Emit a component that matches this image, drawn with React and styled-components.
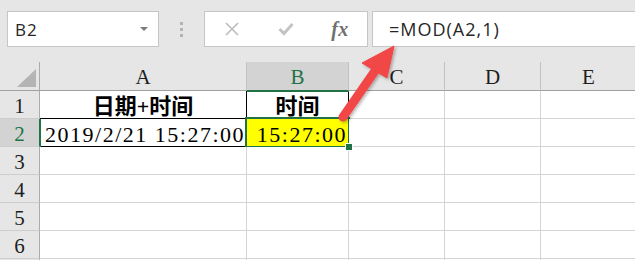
import styled, { createGlobalStyle } from 'styled-components'

const GlobalStyle = createGlobalStyle`
  html, body {
    margin: 0;
    padding: 0;
    background: #e6e6e6;
  }
`

const Page = styled.div`
  position: relative;
  width: 635px;
  height: 260px;
  overflow: hidden;
  background: #e6e6e6;
  font-family: "Liberation Serif", "Noto Sans CJK SC", serif;
`

const Toolbar = styled.div`
  display: flex;
  align-items: flex-start;
  height: 62px;
  padding: 11px 0 0 7px;
  box-sizing: border-box;
`

const NameBox = styled.div`
  display: flex;
  align-items: center;
  justify-content: space-between;
  width: 152px;
  height: 36px;
  box-sizing: border-box;
  padding: 0 10px 0 7px;
  background: #fff;
  border: 1px solid #c6c6c6;
  font-family: "Open Sans", sans-serif;
  font-size: 17px;
  letter-spacing: 1px;
  color: #262626;
`

const Caret = styled.span`
  width: 0;
  height: 0;
  border-left: 4px solid transparent;
  border-right: 4px solid transparent;
  border-top: 4px solid #7b7b7b;
`

const Grip = styled.div`
  display: flex;
  flex-direction: column;
  align-items: center;
  justify-content: center;
  gap: 3px;
  width: 45px;
  height: 36px;
`

const GripDot = styled.span`
  width: 3px;
  height: 3px;
  background: #b3b3b3;
`

const FnBox = styled.div`
  display: flex;
  width: 164px;
  height: 36px;
  box-sizing: border-box;
  background: #fff;
  border: 1px solid #c6c6c6;
`

const FnSlot = styled.div`
  display: flex;
  align-items: center;
  justify-content: center;
  flex: 1;
`

const FxLabel = styled.span`
  font-family: "Liberation Serif", serif;
  font-style: italic;
  font-weight: 700;
  font-size: 20px;
  color: #707070;
  letter-spacing: 0.5px;
`

const FormulaBox = styled.div`
  display: flex;
  align-items: center;
  flex: 1;
  height: 36px;
  box-sizing: border-box;
  margin: 0 -2px 0 4px;
  padding-left: 16px;
  background: #fff;
  border: 1px solid #c6c6c6;
  font-family: "Open Sans", sans-serif;
  font-size: 18px;
  letter-spacing: 1px;
  color: #262626;
`

const Sheet = styled.div`
  display: grid;
  grid-template-columns: 40px 207px 102px 96px 96px 96px;
  grid-template-rows: 29px;
  grid-auto-rows: 28px;
`

const Corner = styled.div`
  position: relative;
  box-sizing: border-box;
  border-right: 1px solid #ababab;
  border-bottom: 1px solid #a0a0a0;
`

const CornerMark = styled.span`
  position: absolute;
  right: 3px;
  bottom: 3px;
  width: 0;
  height: 0;
  border-left: 19px solid transparent;
  border-bottom: 18px solid #b4b4b4;
`

const ColHead = styled.div`
  position: relative;
  z-index: ${p => (p.$active ? 1 : 0)};
  display: flex;
  align-items: center;
  justify-content: center;
  box-sizing: border-box;
  padding-top: 2px;
  background: ${p => (p.$active ? '#d3d3d3' : '#e6e6e6')};
  border-right: 1px solid #c2c2c2;
  border-bottom: 1px solid ${p => (p.$active ? '#217346' : '#a0a0a0')};
  box-shadow: ${p => (p.$active ? '0 1px 0 #217346' : 'none')};
  color: ${p => (p.$active ? '#217346' : '#1e1e1e')};
  font-size: 21px;
  line-height: 22px;
`

const RowHead = styled.div`
  position: relative;
  z-index: ${p => (p.$active ? 1 : 0)};
  display: flex;
  align-items: center;
  justify-content: center;
  box-sizing: border-box;
  padding-top: 2px;
  background: ${p => (p.$active ? '#d3d3d3' : '#e6e6e6')};
  border-right: 1px solid ${p => (p.$active ? '#217346' : '#ababab')};
  border-bottom: 1px solid #cdcdcd;
  box-shadow: ${p => (p.$active ? '1px 0 0 #217346' : 'none')};
  color: ${p => (p.$active ? '#217346' : '#1e1e1e')};
  font-size: 21px;
  line-height: 22px;
`

const Cell = styled.div`
  position: relative;
  display: flex;
  align-items: flex-end;
  justify-content: ${p => (p.$center ? 'center' : 'flex-end')};
  box-sizing: border-box;
  padding: 0 ${p => (p.$mono ? '1px' : '3px')} 0 3px;
  background: ${p => p.$fill || '#fff'};
  border-right: 1px solid ${p => (p.$edge ? '#000' : '#d4d4d4')};
  border-bottom: 1px solid ${p => (p.$edge ? '#000' : '#d4d4d4')};
  font-size: 22px;
  line-height: 22px;
  font-weight: ${p => (p.$bold ? 700 : 400)};
  letter-spacing: ${p => (p.$mono ? '1.5px' : '0')};
  color: #000;
  white-space: nowrap;
`

const Selection = styled.span`
  position: absolute;
  top: -2px;
  left: -2px;
  right: -2px;
  bottom: -2px;
  border: 2px solid #217346;
  pointer-events: none;
`

const FillHandle = styled.span`
  position: absolute;
  right: -5px;
  bottom: -5px;
  width: 6px;
  height: 6px;
  background: #217346;
  border: 1px solid #fff;
  z-index: 2;
`

const Overlay = styled.svg`
  position: absolute;
  top: 0;
  left: 0;
  pointer-events: none;
  z-index: 5;
`

const columns = ['A', 'B', 'C', 'D', 'E']

const blank = [{}, {}, {}, {}, {}]

const rows = [
  [
    { text: '日期+时间', bold: true, center: true, edge: true },
    { text: '时间', bold: true, center: true, edge: true },
    {},
    {},
    {},
  ],
  [
    { text: '2019/2/21 15:27:00', mono: true, edge: true },
    { text: '15:27:00', mono: true, edge: true, fill: '#ffff00', selected: true },
    {},
    {},
    {},
  ],
  blank,
  blank,
  blank,
  blank,
]

const CancelIcon = () => (
  <svg width="16" height="16" viewBox="0 0 16 16">
    <path d="M2 2 L14 14 M14 2 L2 14" stroke="#bcbcbc" strokeWidth="1.6" fill="none" />
  </svg>
)

const EnterIcon = () => (
  <svg width="16" height="14" viewBox="0 0 16 14">
    <path d="M1.5 7 L6 11.5 L14.5 2" stroke="#c4c4c4" strokeWidth="3" fill="none" />
  </svg>
)

const Arrow = () => (
  <Overlay width="635" height="260" viewBox="0 0 635 260">
    <defs>
      <filter id="arrowShadow" x="-20%" y="-20%" width="140%" height="140%">
        <feDropShadow dx="1.5" dy="1.5" stdDeviation="1.5" floodColor="#000" floodOpacity="0.3" />
      </filter>
    </defs>
    <g filter="url(#arrowShadow)" fill="#f24747" stroke="#f24747">
      <line x1="377" y1="68" x2="343" y2="117" strokeWidth="9" strokeLinecap="round" />
      <polygon points="394,46 362,63 387,78" strokeWidth="1" strokeLinejoin="round" />
    </g>
  </Overlay>
)

const App = () => {
  return (
    <Page>
      <GlobalStyle />
      <Toolbar>
        <NameBox>
          B2
          <Caret />
        </NameBox>
        <Grip>
          <GripDot />
          <GripDot />
          <GripDot />
        </Grip>
        <FnBox>
          <FnSlot>
            <CancelIcon />
          </FnSlot>
          <FnSlot>
            <EnterIcon />
          </FnSlot>
          <FnSlot>
            <FxLabel>fx</FxLabel>
          </FnSlot>
        </FnBox>
        <FormulaBox>=MOD(A2,1)</FormulaBox>
      </Toolbar>

      <Sheet>
        <Corner>
          <CornerMark />
        </Corner>
        {columns.map(col => (
          <ColHead key={col} $active={col === 'B'}>
            {col}
          </ColHead>
        ))}
        {rows.map((row, r) => [
          <RowHead key={`h${r}`} $active={r === 1}>
            {r + 1}
          </RowHead>,
          ...row.map((cell, c) => (
            <Cell
              key={`${r}-${c}`}
              $bold={cell.bold}
              $center={cell.center}
              $edge={cell.edge}
              $mono={cell.mono}
              $fill={cell.fill}
            >
              {cell.text}
              {cell.selected && (
                <>
                  <Selection />
                  <FillHandle />
                </>
              )}
            </Cell>
          )),
        ])}
        <RowHead />
        {blank.map((_, c) => (
          <Cell key={`tail-${c}`} />
        ))}
      </Sheet>

      <Arrow />
    </Page>
  )
}

export default App
